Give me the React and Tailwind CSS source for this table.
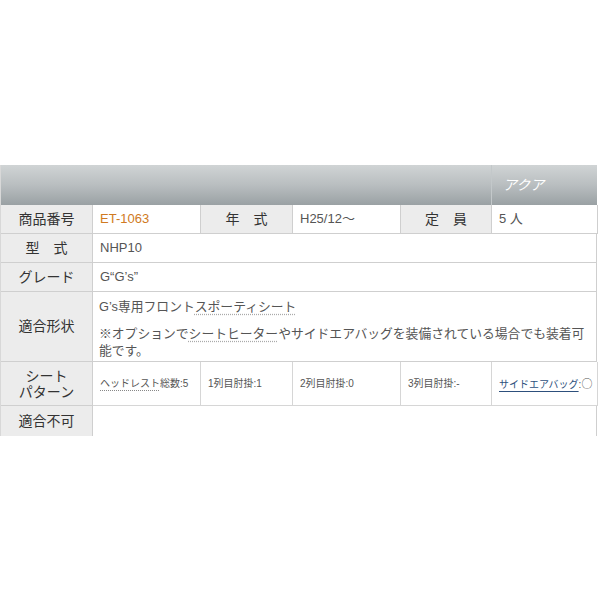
export default function App() {
  const label = 'bg-[#ececec] border-r border-b border-[#cfcfcf] flex items-center justify-center text-[14px] text-[#333]'
  const value = 'border-r border-b border-[#cfcfcf] flex items-center px-[7px] text-[13px] text-[#555]'
  const sub = 'border-r border-b border-[#d6d6d6] flex items-center px-[7px] text-[10px] text-[#555] whitespace-nowrap'

  return (
    <div
      className="w-[600px] h-[600px] bg-white pt-[165px]"
      style={{ fontFamily: '"Liberation Sans", "Noto Sans CJK JP", sans-serif' }}
    >
      <div className="w-[597px] border-l border-[#d8d8d8]">
        {/* Header bar */}
        <div className="flex h-[40px] bg-gradient-to-b from-[#d0d4d5] via-[#b9bec0] to-[#9aa1a4]">
          <div className="flex-1" />
          <div className="w-[106px] border-l border-[#c3c8ca] flex items-center pl-[11px] text-[14px] text-white italic">
            アクア
          </div>
        </div>

        {/* Row 1 */}
        <div className="grid grid-cols-[92px_108px_92px_108px_91px_106px] h-[29px]">
          <div className={label}>商品番号</div>
          <div className={value + ' text-[#d07a22]'}>ET-1063</div>
          <div className={label}>年　式</div>
          <div className={value}>H25/12～</div>
          <div className={label}>定　員</div>
          <div className={value}>5 人</div>
        </div>

        {/* Row 2 */}
        <div className="grid grid-cols-[92px_1fr] h-[29px]">
          <div className={label}>型　式</div>
          <div className={value}>NHP10</div>
        </div>

        {/* Row 3 */}
        <div className="grid grid-cols-[92px_1fr] h-[29px]">
          <div className={label}>グレード</div>
          <div className={value}>G“G’s”</div>
        </div>

        {/* Row 4 */}
        <div className="grid grid-cols-[92px_1fr] h-[70px]">
          <div className={label}>適合形状</div>
          <div className="border-r border-b border-[#cfcfcf] px-[6px] pt-[6px] text-[12.8px] leading-[17px] text-[#555]">
            <p>
              G’s専用フロント
              <span className="underline decoration-dotted decoration-[#aaa] underline-offset-[3px]">スポーティシート</span>
            </p>
            <p className="mt-[10px]">
              ※オプションで
              <span className="underline decoration-dotted decoration-[#aaa] underline-offset-[3px]">シートヒーター</span>
              やサイドエアバッグを装備されている場合でも装着可
              <br />
              能です。
            </p>
          </div>
        </div>

        {/* Row 5 */}
        <div className="grid grid-cols-[92px_108px_92px_108px_91px_106px] h-[44px]">
          <div className={label + ' flex-col leading-[16px]'}>
            <span>シート</span>
            <span>パターン</span>
          </div>
          <div className={sub}>
            <span>
              <span className="underline decoration-dotted decoration-[#888] underline-offset-[3px]">ヘッドレスト</span>総数:5
            </span>
          </div>
          <div className={sub}>1列目肘掛:1</div>
          <div className={sub}>2列目肘掛:0</div>
          <div className={sub}>3列目肘掛:-</div>
          <div className={sub}>
            <span>
              <span className="underline text-[#2d4f7c] underline-offset-[3px]">サイドエアバッグ</span>:
              <span className="text-[11px]" style={{ fontFamily: '"Noto Sans CJK JP", sans-serif' }}>○</span>
            </span>
          </div>
        </div>

        {/* Row 6 */}
        <div className="grid grid-cols-[92px_1fr] h-[30px]">
          <div className="bg-[#ececec] border-r border-[#cfcfcf] flex items-center justify-center text-[14px] text-[#333]">
            適合不可
          </div>
          <div className="border-r border-[#cfcfcf]" />
        </div>
      </div>
    </div>
  )
}
